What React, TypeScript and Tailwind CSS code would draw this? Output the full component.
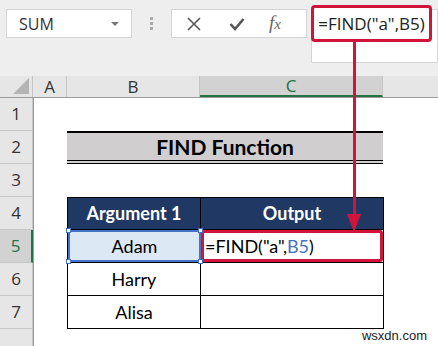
import React from 'react';

const ui = { fontFamily: '"Open Sans", "Noto Sans", sans-serif' };
const cell = { fontFamily: 'Lato, "Liberation Sans", sans-serif' };

const RowHead = ({ n, active }: { n?: number; active?: boolean }) => (
  <div
    className={`flex h-[33px] w-[33px] items-center justify-center border-b border-r border-[#c6c6c6] text-[17px] ${
      active ? 'border-r-2 border-r-[#217346] bg-[#d2d2d2] text-[#217346]' : 'bg-[#e6e6e6] text-[#333]'
    }`}
    style={ui}
  >
    {n}
  </div>
);

const Handle = ({ className }: { className: string }) => (
  <span className={`absolute h-[5px] w-[5px] border border-[#4472c4] bg-white ${className}`} />
);

export default function App() {
  return (
    <div className="relative h-[346px] w-[438px] overflow-hidden bg-white">
      {/* formula bar */}
      <div className="flex h-[76px] items-start bg-[#eeeeee] pt-[9px]">
        <div
          className="ml-[6px] flex h-[29px] w-[126px] items-center justify-between border border-[#d4d4d4] bg-white pl-3 pr-3 text-[16px] text-[#333]"
          style={ui}
        >
          <span>SUM</span>
          <span className="h-0 w-0 border-l-[4px] border-r-[4px] border-t-[4px] border-l-transparent border-r-transparent border-t-[#777]" />
        </div>
        <div className="flex h-[29px] w-[39px] flex-col items-center justify-center gap-[2px]">
          <span className="h-[3px] w-[3px] bg-[#aaa]" />
          <span className="h-[3px] w-[3px] bg-[#aaa]" />
          <span className="h-[3px] w-[3px] bg-[#aaa]" />
        </div>
        <div className="flex h-[29px] w-[136px] items-center border border-[#d4d4d4] bg-white">
          <svg width="14" height="14" viewBox="0 0 14 14" className="ml-[15px]">
            <path d="M1 1 L13 13 M13 1 L1 13" stroke="#555" strokeWidth="1.6" />
          </svg>
          <svg width="16" height="14" viewBox="0 0 16 14" className="ml-[28px]">
            <path d="M1.5 7 L6 12 L14.5 2" stroke="#555" strokeWidth="2.6" fill="none" />
          </svg>
          <span
            className="ml-[24px] text-[19px] italic text-[#666]"
            style={{ fontFamily: '"Liberation Serif", serif' }}
          >
            f<span className="text-[15px]">x</span>
          </span>
        </div>
        <div className="ml-[4px] h-[54px] flex-1 border border-[#d4d4d4] bg-white" />
      </div>

      {/* column headers */}
      <div className="flex h-[22px] border-b border-[#9b9b9b] bg-[#e6e6e6]" style={ui}>
        <div className="relative w-[33px] border-r border-[#c6c6c6]">
          <span className="absolute bottom-[3px] right-[3px] h-0 w-0 border-b-[16px] border-l-[16px] border-b-[#b4b4b4] border-l-transparent" />
        </div>
        <div className="flex w-[34px] items-center justify-center border-r border-[#c6c6c6] text-[17px] text-[#333]">A</div>
        <div className="flex w-[133px] items-center justify-center border-r border-[#c6c6c6] text-[17px] text-[#333]">B</div>
        <div className="flex w-[183px] items-center justify-center border-b-2 border-r border-b-[#217346] border-r-[#c6c6c6] bg-[#d2d2d2] text-[17px] text-[#217346]">
          C
        </div>
        <div className="flex-1" />
      </div>

      {/* sheet */}
      <div className="flex">
        <div className="flex flex-col border-r border-[#9b9b9b]">
          {[1, 2, 3, 4, 5, 6, 7].map((n) => (
            <RowHead key={n} n={n} active={n === 5} />
          ))}
          <RowHead />
        </div>
        <div className="flex flex-col pl-[33px]" style={cell}>
          <div className="h-[33px]" />
          <div className="flex h-[33px] w-[316px] items-center justify-center border-b-[4px] border-t-2 border-double border-black bg-[#d0cece] text-[21px] font-bold text-black">
            FIND Function
          </div>
          <div className="h-[33px]" />
          <div className="flex h-[33px] border border-black bg-[#203864] text-[18px] font-bold text-white">
            <div className="flex w-[133px] items-center justify-center border-r border-black">Argument 1</div>
            <div className="flex w-[182px] items-center justify-center">Output</div>
          </div>
          <div className="flex h-[33px] border-x border-b border-black text-[18px] text-black">
            <div className="relative flex w-[133px] items-center justify-center border-2 border-[#4472c4] bg-[#dde8f5]">
              Adam
              <Handle className="-left-[4px] -top-[4px]" />
              <Handle className="-right-[4px] -top-[4px]" />
              <Handle className="-bottom-[4px] -left-[4px]" />
              <Handle className="-bottom-[4px] -right-[4px]" />
            </div>
            <div className="flex w-[182px] items-center rounded-[3px] border-[3px] border-[#d2143a] pl-[1px]">
              =FIND("a",<span className="text-[#4472c4]">B5</span>)
            </div>
          </div>
          <div className="flex h-[33px] border-x border-b border-black text-[18px] text-black">
            <div className="flex w-[133px] items-center justify-center border-r border-black">Harry</div>
            <div className="w-[182px]" />
          </div>
          <div className="flex h-[33px] border-x border-b border-black text-[18px] text-black">
            <div className="flex w-[133px] items-center justify-center border-r border-black">Alisa</div>
            <div className="w-[182px]" />
          </div>
        </div>
      </div>

      {/* annotation: highlighted formula and arrow */}
      <div
        className="absolute left-[311px] top-[5px] flex h-[37px] w-[121px] items-center justify-center rounded-[4px] border-[3px] border-[#d2143a] bg-white text-[17px] text-[#222]"
        style={ui}
      >
        =FIND("a",B5)
      </div>
      <div className="absolute left-[353px] top-[42px] h-[174px] w-[3px] bg-[#d2143a]" />
      <div className="absolute left-[347px] top-[214px] h-0 w-0 border-l-[7.5px] border-r-[7.5px] border-t-[18px] border-l-transparent border-r-transparent border-t-[#d2143a]" />

      <div
        className="absolute bottom-[1px] right-[11px] text-[13px] text-[#222]"
        style={{ fontFamily: '"Liberation Sans", Arial, sans-serif' }}
      >
        wsxdn.com
      </div>
    </div>
  );
}
